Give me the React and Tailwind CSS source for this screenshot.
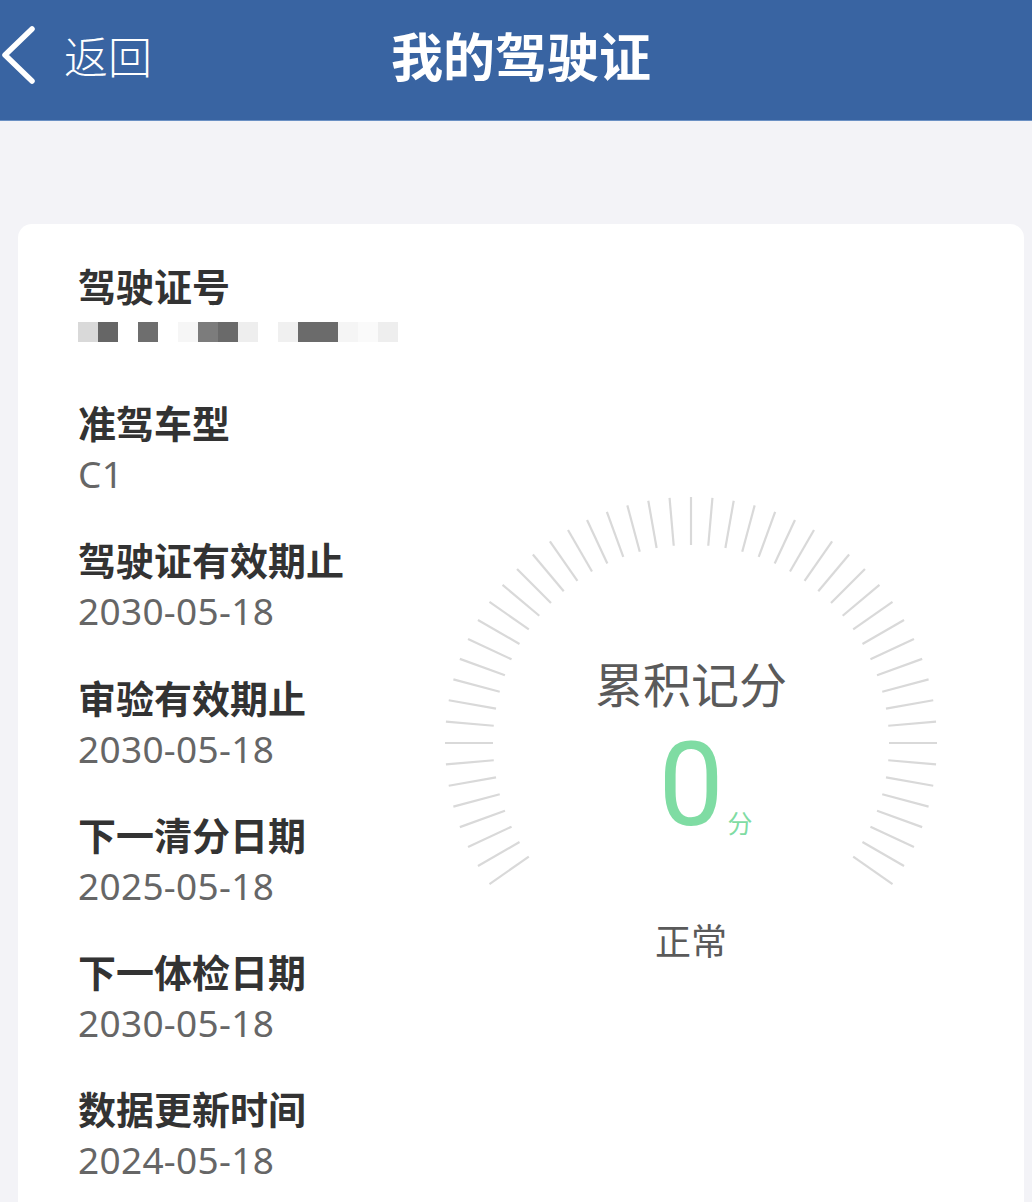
const rows = [
  { label: '驾驶证号', value: null },
  { label: '准驾车型', value: 'C1' },
  { label: '驾驶证有效期止', value: '2030-05-18' },
  { label: '审验有效期止', value: '2030-05-18' },
  { label: '下一清分日期', value: '2025-05-18' },
  { label: '下一体检日期', value: '2030-05-18' },
  { label: '数据更新时间', value: '2024-05-18' },
];

// mosaic blocks hiding the licence number
const blocks = [
  '#d9d9d9', '#666666', null, '#6e6e6e', null, '#f6f6f6', '#7c7c7c', '#6a6a6a', '#eeeeee', null,
  '#f0f0f0', '#6b6b6b', '#6b6b6b', '#f5f5f5', '#fafafa', '#eeeeee',
];

const cjk = { fontFamily: '"Noto Sans CJK SC", "Noto Sans", sans-serif' };
const latin = { fontFamily: '"Noto Sans", "Noto Sans CJK SC", sans-serif' };

function Gauge() {
  const ticks = [];
  for (let a = -35; a <= 215; a += 5) {
    const rad = (a * Math.PI) / 180;
    const c = Math.cos(rad);
    const s = Math.sin(rad);
    ticks.push(
      <line
        key={a}
        x1={250 + 198 * c}
        y1={250 - 198 * s}
        x2={250 + 246 * c}
        y2={250 - 246 * s}
        stroke="#d9d9d9"
        strokeWidth="2.2"
      />
    );
  }
  return (
    <div className="relative w-[500px] h-[500px] flex flex-col items-center">
      <svg className="absolute inset-0" width="500" height="500" viewBox="0 0 500 500">
        {ticks}
      </svg>
      <div className="mt-[159px] text-[48px] leading-[60px] text-[#5a5a5a]" style={cjk}>
        累积记分
      </div>
      <div className="relative mt-[16px] h-[115px]">
        <span
          className="block text-[116px] leading-[115px] text-[#7fdca3]"
          style={{ fontFamily: 'Roboto, "Noto Sans", sans-serif' }}
        >
          0
        </span>
        <span className="absolute left-full ml-[4px] bottom-[6px] text-[25px] leading-[30px] text-[#7fdca3]" style={cjk}>
          分
        </span>
      </div>
      <div className="mt-[72px] text-[36px] leading-[48px] text-[#5a5a5a]" style={cjk}>
        正常
      </div>
    </div>
  );
}

export default function App() {
  return (
    <div className="w-[1032px] h-[1202px] overflow-hidden bg-[#f3f3f7]">
      <header className="h-[121px] pb-[10px] bg-[#3964a2] border-b border-[#6a90c4] flex items-center relative">
        <div className="flex items-center">
          <svg width="40" height="60" viewBox="0 0 40 60">
            <polyline
              points="32,4 5,30 32,56"
              fill="none"
              stroke="#ffffff"
              strokeWidth="5.5"
              strokeLinecap="round"
              strokeLinejoin="round"
            />
          </svg>
          <span className="ml-[24px] text-[44px] leading-[56px] text-white font-light" style={cjk}>
            返回
          </span>
        </div>
        <h1
          className="absolute left-0 right-0 pl-[10px] text-center text-[52px] leading-[64px] text-white font-bold"
          style={cjk}
        >
          我的驾驶证
        </h1>
      </header>

      <div className="mt-[103px] ml-[18px] mr-[8px] bg-white rounded-[14px] flex min-h-[1000px]">
        <div className="w-[400px] pl-[60px] pt-[37px] flex flex-col gap-[33.2px]">
          {rows.map((r) => (
            <div key={r.label}>
              <div className="text-[38px] leading-[48px] text-[#333333] font-bold" style={cjk}>
                {r.label}
              </div>
              {r.value ? (
                <div className="text-[37px] leading-[56px] text-[#666666] tracking-[0.3px]" style={latin}>
                  {r.value}
                </div>
              ) : (
                <div className="h-[56px] pt-[13px] flex">
                  {blocks.map((b, i) => (
                    <div key={i} className="w-[20px] h-[20px]" style={{ backgroundColor: b || 'transparent' }} />
                  ))}
                </div>
              )}
            </div>
          ))}
        </div>
        <div className="ml-[23px] mt-[269px]">
          <Gauge />
        </div>
      </div>
    </div>
  );
}
